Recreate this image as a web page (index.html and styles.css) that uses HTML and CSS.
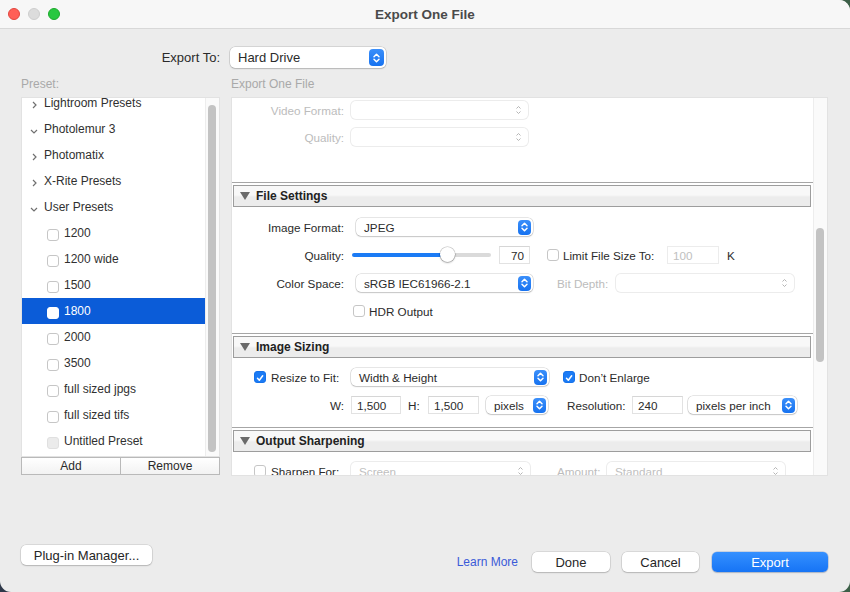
FILE: index.html
```html
<!DOCTYPE html>
<html>
<head>
<meta charset="utf-8">
<link rel="stylesheet" href="styles.css">
</head>
<body>
<div class="window">
  <div class="titlebar">
    <div class="lights"><span class="light red"></span><span class="light gray"></span><span class="light green"></span></div>
    <div class="title">Export One File</div>
    <div></div>
  </div>

  <div class="main">
    <div class="export-to">
      <span class="export-label">Export To:</span>
      <div class="popup popup-lg"><span>Hard Drive</span><span class="stepper stepper-lg"><svg width="9" height="12" viewBox="0 0 9 12"><path d="M2 4.8 L4.5 2.3 L7 4.8 M2 7.2 L4.5 9.7 L7 7.2" fill="none" stroke="#fff" stroke-width="1.5" stroke-linecap="round" stroke-linejoin="round"/></svg></span></div>
    </div>

    <div class="columns">
      <div class="col-left">
        <div class="col-head">Preset:</div>
        <div class="preset-list">
          <div class="tree">
            <div class="row folder"><svg class="chev" width="8" height="10" viewBox="0 0 8 10"><path d="M3 2 L6 5 L3 8" fill="none" stroke="#707070" stroke-width="1.2"/></svg>Lightroom Presets</div>
            <div class="row folder"><svg class="chev" width="8" height="10" viewBox="0 0 8 10"><path d="M1 4 L4 7 L7 4" fill="none" stroke="#707070" stroke-width="1.2"/></svg>Photolemur 3</div>
            <div class="row folder"><svg class="chev" width="8" height="10" viewBox="0 0 8 10"><path d="M3 2 L6 5 L3 8" fill="none" stroke="#707070" stroke-width="1.2"/></svg>Photomatix</div>
            <div class="row folder"><svg class="chev" width="8" height="10" viewBox="0 0 8 10"><path d="M3 2 L6 5 L3 8" fill="none" stroke="#707070" stroke-width="1.2"/></svg>X-Rite Presets</div>
            <div class="row folder"><svg class="chev" width="8" height="10" viewBox="0 0 8 10"><path d="M1 4 L4 7 L7 4" fill="none" stroke="#707070" stroke-width="1.2"/></svg>User Presets</div>
            <div class="row item"><span class="cb"></span>1200</div>
            <div class="row item"><span class="cb"></span>1200 wide</div>
            <div class="row item"><span class="cb"></span>1500</div>
            <div class="row item selected"><span class="cb cb-white"></span>1800</div>
            <div class="row item"><span class="cb"></span>2000</div>
            <div class="row item"><span class="cb"></span>3500</div>
            <div class="row item"><span class="cb"></span>full sized jpgs</div>
            <div class="row item"><span class="cb"></span>full sized tifs</div>
            <div class="row item"><span class="cb cb-dis"></span>Untitled Preset</div>
          </div>
          <div class="vscroll vscroll-left"><div class="thumb thumb-left"></div></div>
        </div>
        <div class="preset-buttons"><div class="pbtn">Add</div><div class="pbtn">Remove</div></div>
      </div>

      <div class="col-right">
        <div class="col-head">Export One File</div>
        <div class="settings">
          <div class="settings-content">
            <div class="block-top">
              <div class="frow dis">
                <span class="flabel">Video Format:</span>
                <div class="popup popup-dis ml7 w177"><span></span><svg width="7" height="10" viewBox="0 0 7 10"><path d="M1.5 3.5 L3.5 1.5 L5.5 3.5 M1.5 6.5 L3.5 8.5 L5.5 6.5" fill="none" stroke="#b5b5b5" stroke-width="1"/></svg></div>
              </div>
              <div class="frow dis">
                <span class="flabel">Quality:</span>
                <div class="popup popup-dis ml7 w177"><span></span><svg width="7" height="10" viewBox="0 0 7 10"><path d="M1.5 3.5 L3.5 1.5 L5.5 3.5 M1.5 6.5 L3.5 8.5 L5.5 6.5" fill="none" stroke="#b5b5b5" stroke-width="1"/></svg></div>
              </div>
            </div>

            <div class="section">
              <div class="sec-head"><svg class="tri" width="10" height="8" viewBox="0 0 10 8"><polygon points="0,0 10,0 5,8" fill="#6a6a6a"/></svg>File Settings</div>
              <div class="sec-body">
                <div class="frow">
                  <span class="flabel">Image Format:</span>
                  <div class="popup ml12 w177"><span>JPEG</span><span class="stepper"><svg width="9" height="12" viewBox="0 0 9 12"><path d="M2 4.8 L4.5 2.3 L7 4.8 M2 7.2 L4.5 9.7 L7 7.2" fill="none" stroke="#fff" stroke-width="1.5" stroke-linecap="round" stroke-linejoin="round"/></svg></span></div>
                </div>
                <div class="frow">
                  <span class="flabel">Quality:</span>
                  <div class="slider"><div class="track"></div><div class="knob"></div></div>
                  <div class="field field-num">70</div>
                  <span class="cb ml17"></span>
                  <span class="ftext ml4 w104">Limit File Size To:</span>
                  <div class="field field-dis w52">100</div>
                  <span class="ftext ml8">K</span>
                </div>
                <div class="frow">
                  <span class="flabel">Color Space:</span>
                  <div class="popup ml12 w177"><span>sRGB IEC61966-2.1</span><span class="stepper"><svg width="9" height="12" viewBox="0 0 9 12"><path d="M2 4.8 L4.5 2.3 L7 4.8 M2 7.2 L4.5 9.7 L7 7.2" fill="none" stroke="#fff" stroke-width="1.5" stroke-linecap="round" stroke-linejoin="round"/></svg></span></div>
                  <span class="ftext dis-text ml24 w52">Bit Depth:</span>
                  <div class="popup popup-dis ml7 w178"><span></span><svg width="7" height="10" viewBox="0 0 7 10"><path d="M1.5 3.5 L3.5 1.5 L5.5 3.5 M1.5 6.5 L3.5 8.5 L5.5 6.5" fill="none" stroke="#b5b5b5" stroke-width="1"/></svg></div>
                </div>
                <div class="frow">
                  <span class="cb ml121"></span>
                  <span class="ftext ml4">HDR Output</span>
                </div>
              </div>
            </div>

            <div class="section">
              <div class="sec-head"><svg class="tri" width="10" height="8" viewBox="0 0 10 8"><polygon points="0,0 10,0 5,8" fill="#6a6a6a"/></svg>Image Sizing</div>
              <div class="sec-body sec-body-b">
                <div class="frow">
                  <span class="cb cb-on ml22"><svg width="12" height="12" viewBox="0 0 12 12"><path d="M3 6.3 L5.2 8.7 L9.2 3.3" fill="none" stroke="#fff" stroke-width="1.8" stroke-linecap="round" stroke-linejoin="round"/></svg></span>
                  <span class="ftext ml5 w80">Resize to Fit:</span>
                  <div class="popup w198"><span>Width &amp; Height</span><span class="stepper"><svg width="9" height="12" viewBox="0 0 9 12"><path d="M2 4.8 L4.5 2.3 L7 4.8 M2 7.2 L4.5 9.7 L7 7.2" fill="none" stroke="#fff" stroke-width="1.5" stroke-linecap="round" stroke-linejoin="round"/></svg></span></div>
                  <span class="cb cb-on ml14"><svg width="12" height="12" viewBox="0 0 12 12"><path d="M3 6.3 L5.2 8.7 L9.2 3.3" fill="none" stroke="#fff" stroke-width="1.8" stroke-linecap="round" stroke-linejoin="round"/></svg></span>
                  <span class="ftext ml4">Don’t Enlarge</span>
                </div>
                <div class="frow">
                  <span class="flabel">W:</span>
                  <div class="field ml7 w50">1,500</div>
                  <span class="ftext ml7 w20">H:</span>
                  <div class="field w51">1,500</div>
                  <div class="popup ml7 w62"><span>pixels</span><span class="stepper"><svg width="9" height="12" viewBox="0 0 9 12"><path d="M2 4.8 L4.5 2.3 L7 4.8 M2 7.2 L4.5 9.7 L7 7.2" fill="none" stroke="#fff" stroke-width="1.5" stroke-linecap="round" stroke-linejoin="round"/></svg></span></div>
                  <span class="ftext ml19 w64">Resolution:</span>
                  <div class="field ml1 w51">240</div>
                  <div class="popup ml5 w109"><span>pixels per inch</span><span class="stepper"><svg width="9" height="12" viewBox="0 0 9 12"><path d="M2 4.8 L4.5 2.3 L7 4.8 M2 7.2 L4.5 9.7 L7 7.2" fill="none" stroke="#fff" stroke-width="1.5" stroke-linecap="round" stroke-linejoin="round"/></svg></span></div>
                </div>
              </div>
            </div>

            <div class="section">
              <div class="sec-head"><svg class="tri" width="10" height="8" viewBox="0 0 10 8"><polygon points="0,0 10,0 5,8" fill="#6a6a6a"/></svg>Output Sharpening</div>
              <div class="sec-body sec-body-b">
                <div class="frow">
                  <span class="cb ml22"></span>
                  <span class="ftext ml5 w80">Sharpen For:</span>
                  <div class="popup popup-dis w179"><span>Screen</span><svg width="7" height="10" viewBox="0 0 7 10"><path d="M1.5 3.5 L3.5 1.5 L5.5 3.5 M1.5 6.5 L3.5 8.5 L5.5 6.5" fill="none" stroke="#b5b5b5" stroke-width="1"/></svg></div>
                  <span class="ftext dis-text ml27 w50">Amount:</span>
                  <div class="popup popup-dis w178"><span>Standard</span><svg width="7" height="10" viewBox="0 0 7 10"><path d="M1.5 3.5 L3.5 1.5 L5.5 3.5 M1.5 6.5 L3.5 8.5 L5.5 6.5" fill="none" stroke="#b5b5b5" stroke-width="1"/></svg></div>
                </div>
              </div>
            </div>
          </div>
          <div class="vscroll vscroll-right"><div class="thumb thumb-right"></div></div>
        </div>
      </div>
    </div>
  </div>

  <div class="footer">
    <div class="btn btn-plugin">Plug-in Manager...</div>
    <div class="footer-right">
      <span class="learn">Learn More</span>
      <div class="btn btn-done">Done</div>
      <div class="btn btn-cancel">Cancel</div>
      <div class="btn btn-export">Export</div>
    </div>
  </div>
</div>
</body>
</html>
```

FILE: styles.css
```css
html, body {
  margin: 0;
  padding: 0;
}
body {
  width: 850px;
  height: 592px;
  overflow: hidden;
  background: linear-gradient(90deg, #2e3849, #3c5f47);
  font-family: "Liberation Sans", Arial, sans-serif;
  color: #2a2a2a;
}
.window {
  width: 850px;
  height: 592px;
  background: #ececec;
  border-radius: 0 11px 11px 11px;
  overflow: hidden;
  display: flex;
  flex-direction: column;
}

/* Title bar */
.titlebar {
  height: 28px;
  flex: none;
  background: #f7f7f7;
  border-bottom: 1px solid #d8d8d8;
  display: grid;
  grid-template-columns: 1fr auto 1fr;
  align-items: center;
}
.lights {
  display: flex;
  gap: 8px;
  padding-left: 8px;
}
.light {
  width: 12px;
  height: 12px;
  border-radius: 50%;
  box-sizing: border-box;
}
.red { background: #ff5f57; border: 0.5px solid #e2463f; }
.gray { background: #dcdcdc; border: 0.5px solid #cecece; }
.green { background: #28c840; border: 0.5px solid #1daa2c; }
.title {
  font-weight: bold;
  font-size: 13.5px;
  color: #4a4a4a;
}

/* Main */
.main {
  padding: 18px 22px 0 21px;
}
.export-to {
  display: flex;
  align-items: center;
  height: 21px;
}
.export-label {
  width: 199px;
  margin-right: 10px;
  text-align: right;
  font-size: 13px;
  color: #2a2a2a;
}
.columns {
  display: grid;
  grid-template-columns: 199px 597px;
  column-gap: 11px;
  margin-top: 9px;
}
.col-head {
  height: 20px;
  font-size: 12px;
  line-height: 14px;
  color: #a9a9a9;
}

/* Preset list */
.preset-list {
  height: 360px;
  box-sizing: border-box;
  background: #fff;
  border: 1px solid #e2e2e2;
  display: flex;
  overflow: hidden;
}
.tree {
  flex: 1;
  margin-top: -8px;
}
.row {
  height: 26px;
  display: flex;
  align-items: center;
  font-size: 12px;
  color: #303030;
}
.row.folder {
  padding-left: 8px;
}
.chev {
  margin-right: 6px;
  margin-top: 3px;
  flex: none;
}
.row.item {
  padding-left: 25px;
}
.row.selected {
  background: #0b5cd8;
  color: #fff;
}
.cb {
  width: 12px;
  height: 12px;
  box-sizing: border-box;
  border: 1px solid #c6c6c6;
  border-radius: 3px;
  background: #fff;
  flex: none;
  display: inline-flex;
}
.row .cb {
  margin-right: 5px;
  margin-top: 3px;
}
.cb-white {
  border-color: #fff;
}
.cb-dis {
  background: #ebebeb;
  border-color: #e0e0e0;
}
.cb-on {
  background: #1b7bf5;
  border-color: #1672ea;
}
.vscroll {
  width: 14px;
  flex: none;
  background: #fafafa;
  border-left: 1px solid #ededed;
  box-sizing: border-box;
}
.thumb {
  width: 8px;
  border-radius: 4px;
  background: #c3c3c3;
}
.thumb-left {
  margin: 7px 0 0 2px;
  height: 347px;
}
.preset-buttons {
  display: flex;
  height: 18px;
}
.pbtn {
  flex: 1;
  box-sizing: border-box;
  border: 1px solid #b9b9b9;
  background: linear-gradient(#ffffff, #f2f2f2);
  font-size: 12px;
  color: #2a2a2a;
  display: flex;
  align-items: center;
  justify-content: center;
}
.pbtn + .pbtn {
  margin-left: -1px;
}

/* Settings panel */
.settings {
  height: 379px;
  box-sizing: border-box;
  background: #fff;
  border: 1px solid #e2e2e2;
  display: flex;
  overflow: hidden;
}
.settings-content {
  flex: 1;
  overflow: hidden;
}
.thumb-right {
  margin: 130px 0 0 2px;
  height: 134px;
}
.block-top {
  padding: 3px 0 36px;
  display: flex;
  flex-direction: column;
  gap: 9px;
}
.section {
  border-top: 1px solid #a6a6a6;
}
.sec-head {
  margin: 2px 2px 0 1px;
  height: 22px;
  box-sizing: border-box;
  border: 1px solid #9d9d9d;
  background: linear-gradient(#f8f8f8 0%, #f8f8f8 45%, #ececec 55%, #ececec 100%);
  display: flex;
  align-items: center;
  padding-left: 6px;
  font-weight: bold;
  font-size: 12px;
  color: #222;
}
.tri {
  margin-right: 6px;
  flex: none;
}
.sec-body {
  padding: 11px 0 13px;
  display: flex;
  flex-direction: column;
  gap: 10px;
}
.sec-body-b {
  padding-top: 10px;
}

.frow {
  display: flex;
  align-items: center;
  height: 18px;
  font-size: 11.7px;
  color: #2b2b2b;
  white-space: nowrap;
}
.frow.dis .flabel,
.dis-text {
  color: #bcbcbc;
}
.flabel {
  width: 112px;
  text-align: right;
  flex: none;
}
.ftext {
  flex: none;
}

/* Popups */
.popup {
  height: 18px;
  box-sizing: border-box;
  background: #fff;
  border-radius: 5px;
  box-shadow: 0 0 0 0.5px rgba(0, 0, 0, 0.2), 0 1px 1.5px rgba(0, 0, 0, 0.14);
  display: flex;
  align-items: center;
  justify-content: space-between;
  padding: 0 2px 0 8px;
  flex: none;
  font-size: 11.7px;
  color: #2b2b2b;
}
.popup-lg {
  width: 156px;
  height: 21px;
  font-size: 13px;
  padding-left: 8px;
}
.popup-dis {
  box-shadow: 0 0 0 1px #ececec;
  color: #c0c0c0;
  padding-right: 6px;
}
.stepper {
  width: 13px;
  height: 15px;
  border-radius: 4px;
  background: linear-gradient(#3b8ffa, #1672f0);
  display: flex;
  align-items: center;
  justify-content: center;
}
.stepper-lg {
  width: 15px;
  height: 17px;
}

/* Fields */
.field {
  height: 18px;
  box-sizing: border-box;
  border: 1px solid #e2e2e2;
  border-top-color: #d6d6d6;
  background: #fff;
  padding: 0 5px;
  display: flex;
  align-items: center;
  flex: none;
  font-size: 11.7px;
  color: #2b2b2b;
}
.field-num {
  width: 31px;
  margin-left: 8px;
  justify-content: flex-end;
}
.field-dis {
  color: #c0c0c0;
  border-color: #ececec;
}

/* Slider */
.slider {
  position: relative;
  width: 139px;
  height: 18px;
  margin-left: 8px;
  flex: none;
  display: flex;
  align-items: center;
}
.track {
  width: 100%;
  height: 4px;
  border-radius: 2px;
  background: linear-gradient(90deg, #1b7bf5 0, #1b7bf5 95px, #dadada 95px, #dadada 100%);
}
.knob {
  position: absolute;
  left: 88px;
  top: 1px;
  width: 15px;
  height: 15px;
  border-radius: 50%;
  background: #fff;
  box-shadow: 0 0 0 0.5px rgba(0, 0, 0, 0.25), 0 1px 2px rgba(0, 0, 0, 0.25);
}

/* Spacing helpers */
.ml1 { margin-left: 1px; }
.ml4 { margin-left: 4px; }
.ml5 { margin-left: 5px; }
.ml7 { margin-left: 7px; }
.ml8 { margin-left: 8px; }
.ml12 { margin-left: 12px; }
.ml14 { margin-left: 14px; }
.ml17 { margin-left: 17px; }
.ml19 { margin-left: 19px; }
.ml22 { margin-left: 22px; }
.ml24 { margin-left: 24px; }
.ml27 { margin-left: 27px; }
.ml121 { margin-left: 121px; }
.w20 { width: 20px; }
.w50 { width: 50px; }
.w51 { width: 51px; }
.w52 { width: 52px; }
.w62 { width: 62px; }
.w64 { width: 64px; }
.w80 { width: 80px; }
.w104 { width: 104px; }
.w109 { width: 109px; }
.w177 { width: 177px; }
.w178 { width: 178px; }
.w179 { width: 179px; }
.w198 { width: 198px; }

/* Footer */
.footer {
  margin-top: auto;
  display: flex;
  align-items: flex-end;
  justify-content: space-between;
  padding: 0 22px 20px 21px;
}
.btn {
  height: 20px;
  box-sizing: border-box;
  background: #fff;
  border-radius: 5px;
  box-shadow: 0 0 0 0.5px rgba(0, 0, 0, 0.16), 0 1px 1.5px rgba(0, 0, 0, 0.16);
  font-size: 13px;
  color: #262626;
  display: flex;
  align-items: center;
  justify-content: center;
}
.btn-plugin {
  width: 131px;
  margin-bottom: 7px;
}
.footer-right {
  display: flex;
  align-items: center;
}
.learn {
  font-size: 12px;
  color: #3a5ad8;
  margin-right: 14px;
}
.btn-done { width: 78px; }
.btn-cancel { width: 77px; margin-left: 12px; }
.btn-export {
  width: 116px;
  margin-left: 13px;
  color: #fff;
  background: linear-gradient(#3590ff, #1674f5);
  box-shadow: 0 0 0 0.5px rgba(0, 60, 160, 0.3), 0 1px 1.5px rgba(0, 0, 0, 0.15);
}
```
